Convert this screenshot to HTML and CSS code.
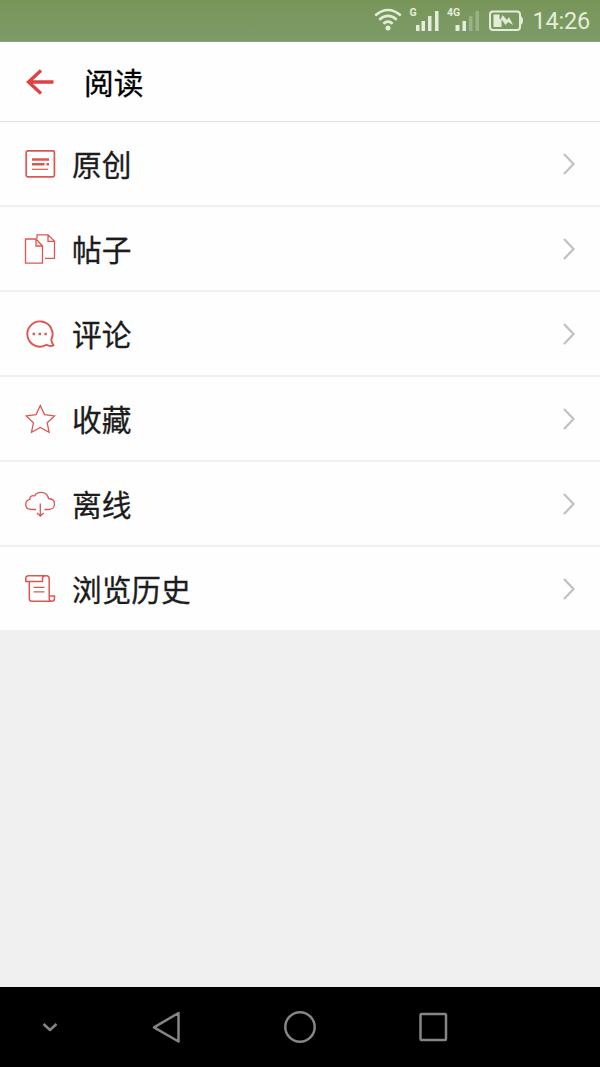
FILE: index.html
```html
<!DOCTYPE html>
<html lang="zh-CN">
<head>
<meta charset="utf-8">
<title>阅读</title>
<link rel="stylesheet" href="styles.css">
</head>
<body>
	<div class="statusbar">
		<svg class="status-icons" width="150" height="32" viewBox="0 0 150 32">
			<g fill="none" stroke="#e3edda" stroke-width="2.5">
				<path d="M1.2 15.5Q14 4.5 26.8 15.5"/>
				<path d="M5.2 19.7Q14 12 22.8 19.7"/>
				<path d="M9.3 23.7Q14 19.5 18.7 23.7"/>
			</g>
			<circle cx="14" cy="28" r="2.5" fill="#e3edda"/>
			<g fill="#e3edda">
				<path d="M42 25h3.5v6H42zM47.5 21h3.5v10h-3.5zM54 16h3.5v15H54zM61 11h3.5v20H61z"/>
				<path d="M81.500 25h4v6h-4zM88.500 21h3.500v10h-3.500z"/>
				<path d="M95 16h3.500v15H95zM101.500 11h3.500v20h-3.500z" opacity=".3"/>
				<path d="M119.500 14.500h6v4l2 2v6.500h-8z"/>
				<path d="M126 21l2.500-6 4.500 5 2-3 4 8-5-3-2.500 3-3.500-5z"/>
				<path d="M147 16q2 1 2 4.500t-2 4.500z"/>
			</g>
			<rect x="116" y="11.500" width="30" height="18.500" rx="3" fill="none" stroke="#e3edda" stroke-width="2"/>
			<text class="net" x="35.500" y="15.500">G</text>
			<text class="net" x="73" y="15.500">4G</text>
		</svg>
		<span class="clock">14:26</span>
	</div>

	<div class="titlebar">
		<svg class="back" width="32" height="32" viewBox="0 0 32 32"><path d="M29.500 16H4.500M17 4.500L4.500 16L17 27.500"/></svg>
		<h1>阅读</h1>
	</div>

	<ul class="menu">
		<li>
			<svg class="icon" viewBox="0 0 32 32">
				<rect x="2.200" y="2.800" width="28.200" height="26" rx="1.500" stroke-width="1.700"/>
				<path d="M8 11.500h17M8 16.300h12.500M22.500 16.300h2.500" stroke-width="2.400"/>
				<path d="M8 21.300h16" stroke-width="1.200"/>
			</svg>
			<span class="label">原创</span>
			<svg class="arrow" viewBox="0 0 14 24"><path d="M2 2l9.500 10L2 22"/></svg>
		</li>
		<li>
			<svg class="icon" viewBox="0 0 32 32">
				<path d="M1.500 6H12l6.500 7v17.200h-17zM12 6v7h6.500M13 5.500V1.800h11l6.500 6.500v17h-9.500M24 1.800v6.500h6.500"/>
			</svg>
			<span class="label">帖子</span>
			<svg class="arrow" viewBox="0 0 14 24"><path d="M2 2l9.500 10L2 22"/></svg>
		</li>
		<li>
			<svg class="icon" viewBox="0 0 32 32">
				<path d="M22.500 26.800A12.600 12.600 0 1 1 27.300 21.500Q27.500 25 29.500 27.200Q28 29 22.500 26.800z" stroke-width="1.900"/>
				<path d="M8.600 16h2.400M14.600 16h2.400M20.400 16h2.400" stroke-width="2.400"/>
			</svg>
			<span class="label">评论</span>
			<svg class="arrow" viewBox="0 0 14 24"><path d="M2 2l9.500 10L2 22"/></svg>
		</li>
		<li>
			<svg class="icon" viewBox="0 0 32 32">
				<path d="M16.300 2.500l4.200 9.100 10 1.300-7.300 6.900 1.900 9.500-8.800-4.800-8.800 4.800 1.900-9.500-7.300-6.900 10-1.300z"/>
			</svg>
			<span class="label">收藏</span>
			<svg class="arrow" viewBox="0 0 14 24"><path d="M2 2l9.500 10L2 22"/></svg>
		</li>
		<li>
			<svg class="icon" viewBox="0 0 32 32">
				<path d="M12 21.500H7.500C3.500 21.500 1.700 19 1.700 16.300C1.700 13.500 3.500 11.800 6 11.300C5.500 8.500 8 7 10.500 8C12 5 14.500 4.300 17 4.300C21 4.300 23.800 7 24.500 10.500C28.500 10.700 30.500 13 30.500 16C30.500 19 28.500 21.500 25 21.500H20.500"/>
				<path d="M16.300 15.500v12.500M13 25l3.300 3 3.300-3"/>
			</svg>
			<span class="label">离线</span>
			<svg class="arrow" viewBox="0 0 14 24"><path d="M2 2l9.500 10L2 22"/></svg>
		</li>
		<li>
			<svg class="icon" viewBox="0 0 32 32">
				<path d="M5.300 8.500V25.500Q5.300 28.300 8 28.300H27.500Q30.500 28.300 30.500 25.500V23H25.200V5.500Q25.200 2.800 22.500 2.800H4.500Q1.800 2.800 1.800 5.500V8.500H18.500V5.500Q18.500 2.800 21.500 2.800M25.200 23V25.500Q25.200 28.300 27.500 28.300" stroke-width="1.500"/>
				<path d="M9.500 14.300h11M9.500 18.800h11"/>
			</svg>
			<span class="label">浏览历史</span>
			<svg class="arrow" viewBox="0 0 14 24"><path d="M2 2l9.500 10L2 22"/></svg>
		</li>
	</ul>

	<div class="navbar">
		<svg viewBox="0 0 36 36"><path d="M11.500 15l6.500 6 6.500-6" stroke-width="2.500"/></svg>
		<svg viewBox="0 0 36 36"><path d="M29.500 4v28.500L5 18.300z"/></svg>
		<svg viewBox="0 0 36 36"><circle cx="18" cy="18" r="14.700"/></svg>
		<svg viewBox="0 0 36 36"><rect x="5.500" y="5" width="25.500" height="26" rx="1"/></svg>
	</div>
</body>
</html>
```

FILE: styles.css
```css
body {
	margin: 0;
	height: 1067px;
	display: flex;
	flex-direction: column;
	background-color: #f0f0f0;
	font-family: "Noto Sans CJK SC", sans-serif;
	overflow: hidden;
}

.statusbar {
	box-sizing: border-box;
	height: 42px;
	padding-right: 10px;
	display: flex;
	justify-content: flex-end;
	border-bottom: 1px solid #92a585;
	background: linear-gradient(#789559, #7d9b68);
}

.status-icons {
	margin-right: 8px;
}

.net {
	font: bold 10.5px Roboto, sans-serif;
	fill: #e3edda;
}

.clock {
	font: 23.5px/43px Roboto, sans-serif;
	letter-spacing: -0.2px;
	color: #e3edda;
}

.titlebar {
	box-sizing: border-box;
	height: 80px;
	padding-left: 24px;
	display: flex;
	align-items: center;
	border-bottom: 1px solid #e0e0e0;
	background-color: #fefefe;
}

.back {
	fill: none;
	stroke: #dc4441;
	stroke-width: 3.3;
}

h1 {
	margin: 0 0 0 28px;
	font-size: 29.7px;
	font-weight: 400;
	line-height: 44px;
	color: #000;
	-webkit-text-stroke: 0.3px #000;
}

.menu {
	list-style-type: none;
	margin: 0;
	padding: 0;
}

.menu li {
	box-sizing: border-box;
	height: 85px;
	padding: 1px 24px 0;
	display: flex;
	align-items: center;
	border-bottom: 2px solid #f0f0f0;
	background-color: #fefefe;
}

.icon {
	width: 32px;
	height: 32px;
	fill: none;
	stroke: #dc5753;
	stroke-width: 1.3;
}

.label {
	flex: 1;
	margin-left: 16px;
	font-size: 29.7px;
	line-height: 44px;
	color: #1c1c1c;
	-webkit-text-stroke: 0.3px #1c1c1c;
}

.arrow {
	width: 14px;
	height: 24px;
	fill: none;
	stroke: #c2c2c2;
	stroke-width: 2.3;
}

.navbar {
	height: 80px;
	margin-top: auto;
	padding-left: 32px;
	display: flex;
	align-items: center;
	background-color: #000;
}

.navbar svg {
	width: 36px;
	height: 36px;
	margin-right: 97px;
	fill: none;
	stroke: #858585;
	stroke-width: 2.5;
	stroke-linejoin: round;
}

.navbar svg:first-child {
	margin-right: 81px;
}
```
